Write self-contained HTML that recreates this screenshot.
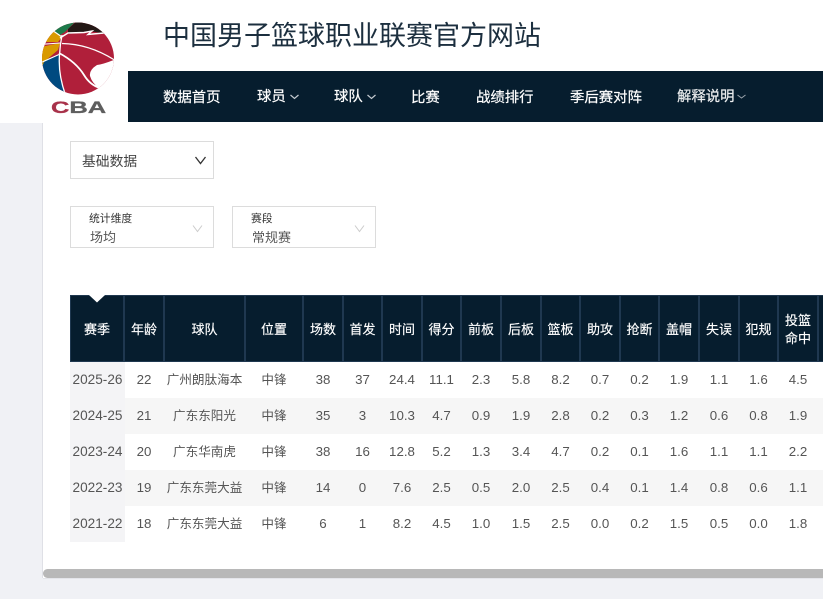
<!DOCTYPE html>
<html lang="zh"><head><meta charset="utf-8"><title>CBA</title>
<style>
*{box-sizing:border-box}
html,body{margin:0;padding:0}
body{width:823px;height:599px;overflow:hidden;position:relative;background:#f0f1f5;font-family:"Liberation Sans","Noto Sans CJK SC",sans-serif}
.a{position:absolute;white-space:nowrap}
.nav{color:#fff;font-size:14.4px;line-height:20px;font-family:"Noto Sans CJK SC",sans-serif;-webkit-text-stroke:.2px #fff}
.sel{position:absolute;background:#fff;border:1px solid #dcdcdc}
table{position:absolute;left:70px;top:295px;border-collapse:separate;border-spacing:0;table-layout:fixed;width:749px;font-family:"Liberation Sans","Noto Sans CJK SC",sans-serif}
th{height:67px;background:#061d2e;color:#fff;font-weight:400;font-size:13px;line-height:18px;padding:0;text-align:center;border-right:2px solid #1f3850;border-top:1px solid #1f3850;border-bottom:1px solid #1f3850;font-family:"Noto Sans CJK SC",sans-serif;-webkit-text-stroke:.15px #fff}
th:first-child{border-left:1px solid #1f3850}
td{height:36px;padding:0 2px 2px 0;text-align:center;color:#555;font-size:13.3px;background:#fff}
td:first-child{padding-right:0;font-size:13.600px}
td.c{font-size:12.6px;padding-bottom:3px;font-family:"Noto Sans CJK SC",sans-serif}
tr.g td{background:#f6f6f6}
td:first-child,tr.g td:first-child{background:#f4f4f6}
</style></head><body>
<div class="a" style="left:43px;top:0;width:780px;height:578px;background:#fff"></div>
<div class="a" style="left:0;top:0;width:43px;height:123px;background:#fff"></div>
<div class="a" style="left:42px;top:123px;width:1px;height:455px;background:#dfe0e6"></div>
<div class="a" style="left:43px;top:569px;width:780px;height:9px;background:#b8b8b8;border-radius:5px 0 0 5px"></div>
<div class="a" style="left:43px;top:578px;width:780px;height:1px;background:#e4e5ea"></div>

<svg class="a" style="left:40px;top:20px" width="78" height="96" viewBox="40 20 78 96">
<defs><clipPath id="b"><circle cx="78" cy="58.500" r="36"/></clipPath></defs>
<g clip-path="url(#b)">
<rect x="40" y="20" width="78" height="78" fill="#b01f3a"/>
<path d="M40 62L60 54Q58 74 66 96L40 96Z" fill="#004a80"/>
<path d="M40 47L60 43 58 50 44 62 40 72Z" fill="#d99a00"/>
<path d="M40 42L54 31 62 37 58 42Z" fill="#d99a00"/>
<path d="M54 31L65 22 76 21 65 32 60 35Z" fill="#1c7a4a"/>
<path d="M68 29L78 20 92 20 106 34 90 31 68 34Z" fill="#231815"/>
<path d="M40 44.500L60 43" fill="none" stroke="#fff" stroke-width="1.100"/>
<path d="M40 63L59 54.500" fill="none" stroke="#fff" stroke-width="1.100"/>
<path d="M52 30L62 37" fill="none" stroke="#fff" stroke-width="1.100"/>
<path d="M62 35Q60 45 59.500 55Q58 74 65.500 95" fill="none" stroke="#fff" stroke-width="1.300"/>
<path d="M60 38L68 33 84 32.500 92 31 88 34.500 104 33" fill="none" stroke="#fff" stroke-width="1.400"/>
<path d="M62 43.500Q90 44 116 61" fill="none" stroke="#fff" stroke-width="1.200"/>
<path d="M59 53Q76 62 84 75Q90 85 100 88" fill="none" stroke="#fff" stroke-width="1.800"/>
<path d="M116 59Q104 64 97 65Q89 70 90 76Q92 83 99 88L118 92Z" fill="#fff"/>
</g>
<text transform="translate(51 113) scale(1.500 1)" font-family="Liberation Sans,sans-serif" font-size="17" font-weight="700" fill="#a8324a" stroke="#a8324a" stroke-width=".3">C<tspan fill="#5e5e5e" stroke="#5e5e5e">BA</tspan></text>
</svg>

<div class="a" style="left:163px;top:15px;font-size:27px;line-height:38px;color:#1c2f3f;font-family:'Noto Sans CJK SC',sans-serif">中国男子篮球职业联赛官方网站</div>

<div class="a" style="left:128px;top:71px;width:695px;height:51px;background:#061d2e"></div>
<div class="a nav" style="left:163px;top:87px">数据首页</div>
<div class="a nav" style="left:257px;top:86px">球员</div>
<div class="a nav" style="left:334px;top:86px">球队</div>
<div class="a nav" style="left:411px;top:87px">比赛</div>
<div class="a nav" style="left:476px;top:87px">战绩排行</div>
<div class="a nav" style="left:570px;top:87px">季后赛对阵</div>
<div class="a nav" style="left:677px;top:86px;color:#e4e6e8">解释说明</div>
<svg class="a" style="left:0;top:0" width="823" height="122" fill="none" stroke="#c4cad0" stroke-width="1.200">
<path d="M290.500 95L294.500 98.500 298.500 95"/><path d="M367.500 95L371.500 98.500 375.500 95"/><path d="M737.500 95L741.500 98 745.500 95" stroke="#9aa3ab" stroke-width="1"/>
</svg>

<div class="sel" style="left:70px;top:141px;width:144px;height:38px"></div>
<div class="a" style="left:82px;top:150px;font-size:13.800px;line-height:20px;color:#444;font-family:'Noto Sans CJK SC',sans-serif">基础数据</div>
<div class="sel" style="left:70px;top:206px;width:144px;height:42px"></div>
<div class="a" style="left:89px;top:210px;font-size:10.800px;line-height:16px;color:#333;font-family:'Noto Sans CJK SC',sans-serif">统计维度</div>
<div class="a" style="left:90px;top:228px;font-size:13px;line-height:18px;color:#555;font-family:'Noto Sans CJK SC',sans-serif">场均</div>
<div class="sel" style="left:232px;top:206px;width:144px;height:42px"></div>
<div class="a" style="left:251px;top:210px;font-size:10.800px;line-height:16px;color:#333;font-family:'Noto Sans CJK SC',sans-serif">赛段</div>
<div class="a" style="left:252px;top:228px;font-size:13px;line-height:18px;color:#555;font-family:'Noto Sans CJK SC',sans-serif">常规赛</div>
<svg class="a" style="left:0;top:130px" width="400" height="110" fill="none">
<path d="M195.500 27L200.500 33.500 205.500 27" stroke="#333" stroke-width="1.300"/>
<path d="M193 95.500L197.500 101.500 202 95.500" stroke="#ccc" stroke-width="1"/>
<path d="M355 95.500L359.500 101.500 364 95.500" stroke="#ccc" stroke-width="1"/>
</svg>

<table>
<colgroup><col style="width:55px"><col style="width:40px"><col style="width:81px"><col style="width:58px"><col style="width:40px"><col style="width:39px"><col style="width:40px"><col style="width:39px"><col style="width:40px"><col style="width:40px"><col style="width:39px"><col style="width:40px"><col style="width:39px"><col style="width:40px"><col style="width:40px"><col style="width:39px"><col style="width:40px"></colgroup>
<tr><th>赛季</th><th>年龄</th><th>球队</th><th>位置</th><th>场数</th><th>首发</th><th>时间</th><th>得分</th><th>前板</th><th>后板</th><th>篮板</th><th>助攻</th><th>抢断</th><th>盖帽</th><th>失误</th><th>犯规</th><th>投篮<br>命中</th></tr>
<tr><td>2025-26</td><td>22</td><td class="c">广州朗肽海本</td><td class="c">中锋</td><td>38</td><td>37</td><td>24.4</td><td>11.1</td><td>2.3</td><td>5.8</td><td>8.2</td><td>0.7</td><td>0.2</td><td>1.9</td><td>1.1</td><td>1.6</td><td>4.5</td></tr>
<tr class="g"><td>2024-25</td><td>21</td><td class="c">广东东阳光</td><td class="c">中锋</td><td>35</td><td>3</td><td>10.3</td><td>4.7</td><td>0.9</td><td>1.9</td><td>2.8</td><td>0.2</td><td>0.3</td><td>1.2</td><td>0.6</td><td>0.8</td><td>1.9</td></tr>
<tr><td>2023-24</td><td>20</td><td class="c">广东华南虎</td><td class="c">中锋</td><td>38</td><td>16</td><td>12.8</td><td>5.2</td><td>1.3</td><td>3.4</td><td>4.7</td><td>0.2</td><td>0.1</td><td>1.6</td><td>1.1</td><td>1.1</td><td>2.2</td></tr>
<tr class="g"><td>2022-23</td><td>19</td><td class="c">广东东莞大益</td><td class="c">中锋</td><td>14</td><td>0</td><td>7.6</td><td>2.5</td><td>0.5</td><td>2.0</td><td>2.5</td><td>0.4</td><td>0.1</td><td>1.4</td><td>0.8</td><td>0.6</td><td>1.1</td></tr>
<tr><td>2021-22</td><td>18</td><td class="c">广东东莞大益</td><td class="c">中锋</td><td>6</td><td>1</td><td>8.2</td><td>4.5</td><td>1.0</td><td>1.5</td><td>2.5</td><td>0.0</td><td>0.2</td><td>1.5</td><td>0.5</td><td>0.0</td><td>1.8</td></tr>
</table>
<div class="a" style="left:819px;top:295px;width:4px;height:67px;background:#061d2e;border-top:1px solid #1f3850;border-bottom:1px solid #1f3850"></div>
<div class="a" style="left:819px;top:398px;width:4px;height:36px;background:#f6f6f6"></div>
<div class="a" style="left:819px;top:470px;width:4px;height:36px;background:#f6f6f6"></div>
<svg class="a" style="left:89px;top:295px" width="16" height="8"><path d="M0 0H16L8 7.500Z" fill="#fff"/></svg>
</body></html>
